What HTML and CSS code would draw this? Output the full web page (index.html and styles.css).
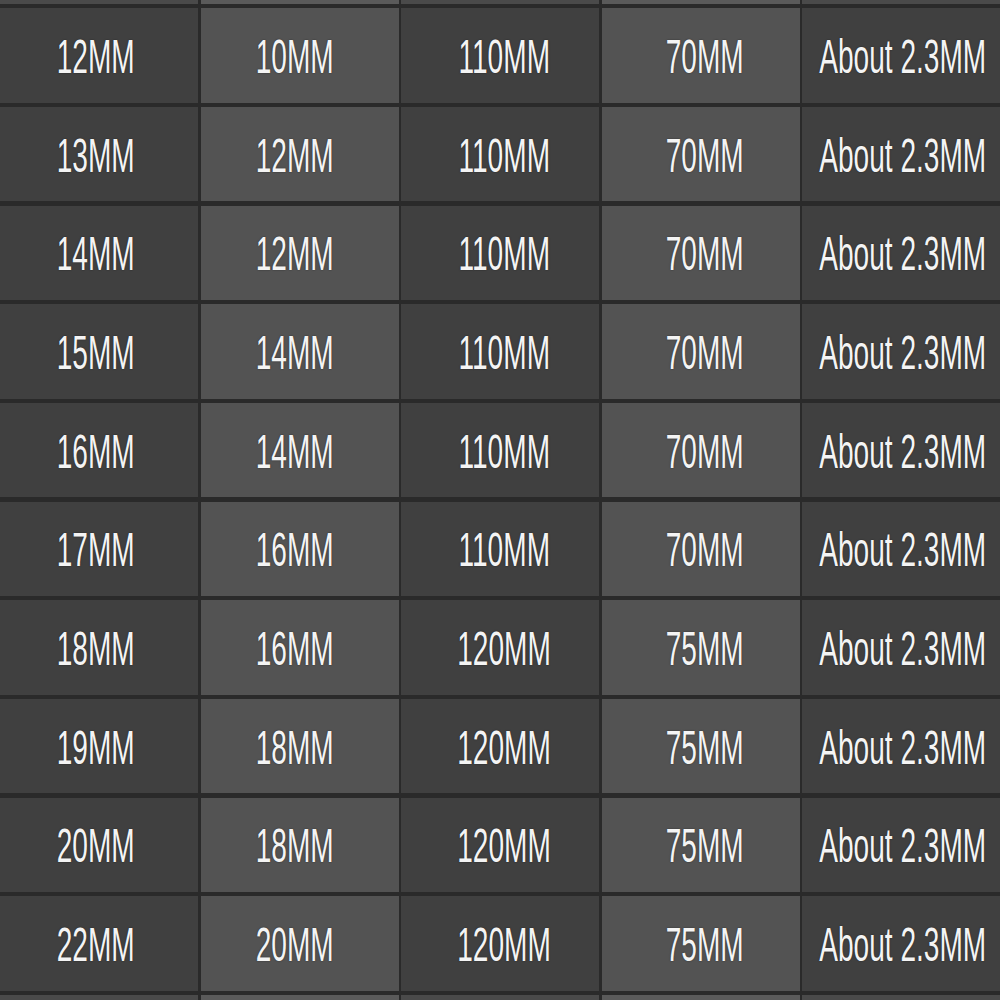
FILE: index.html
```html
<!DOCTYPE html>
<html>
<head>
<meta charset="utf-8">
<link rel="stylesheet" href="styles.css">
</head>
<body>
<div class="table">
  <div class="cell dark edge"></div><div class="cell light edge"></div><div class="cell dark edge"></div><div class="cell light edge"></div><div class="cell dark edge"></div>

  <div class="cell dark"><span>12MM</span></div><div class="cell light"><span>10MM</span></div><div class="cell dark"><span>110MM</span></div><div class="cell light"><span>70MM</span></div><div class="cell dark"><span>About 2.3MM</span></div>
  <div class="cell dark"><span>13MM</span></div><div class="cell light"><span>12MM</span></div><div class="cell dark"><span>110MM</span></div><div class="cell light"><span>70MM</span></div><div class="cell dark"><span>About 2.3MM</span></div>
  <div class="cell dark"><span>14MM</span></div><div class="cell light"><span>12MM</span></div><div class="cell dark"><span>110MM</span></div><div class="cell light"><span>70MM</span></div><div class="cell dark"><span>About 2.3MM</span></div>
  <div class="cell dark"><span>15MM</span></div><div class="cell light"><span>14MM</span></div><div class="cell dark"><span>110MM</span></div><div class="cell light"><span>70MM</span></div><div class="cell dark"><span>About 2.3MM</span></div>
  <div class="cell dark"><span>16MM</span></div><div class="cell light"><span>14MM</span></div><div class="cell dark"><span>110MM</span></div><div class="cell light"><span>70MM</span></div><div class="cell dark"><span>About 2.3MM</span></div>
  <div class="cell dark"><span>17MM</span></div><div class="cell light"><span>16MM</span></div><div class="cell dark"><span>110MM</span></div><div class="cell light"><span>70MM</span></div><div class="cell dark"><span>About 2.3MM</span></div>
  <div class="cell dark"><span>18MM</span></div><div class="cell light"><span>16MM</span></div><div class="cell dark"><span>120MM</span></div><div class="cell light"><span>75MM</span></div><div class="cell dark"><span>About 2.3MM</span></div>
  <div class="cell dark"><span>19MM</span></div><div class="cell light"><span>18MM</span></div><div class="cell dark"><span>120MM</span></div><div class="cell light"><span>75MM</span></div><div class="cell dark"><span>About 2.3MM</span></div>
  <div class="cell dark"><span>20MM</span></div><div class="cell light"><span>18MM</span></div><div class="cell dark"><span>120MM</span></div><div class="cell light"><span>75MM</span></div><div class="cell dark"><span>About 2.3MM</span></div>
  <div class="cell dark"><span>22MM</span></div><div class="cell light"><span>20MM</span></div><div class="cell dark"><span>120MM</span></div><div class="cell light"><span>75MM</span></div><div class="cell dark"><span>About 2.3MM</span></div>

  <div class="cell dark edge"></div><div class="cell light edge"></div><div class="cell dark edge"></div><div class="cell light edge"></div><div class="cell dark edge"></div>
</div>
</body>
</html>
```
FILE: styles.css
```css
html, body {
  margin: 0;
  padding: 0;
  background: #2a2a2a;
}
.table {
  width: 1000px;
  height: 1000px;
  display: grid;
  grid-template-columns: repeat(5, 1fr);
  grid-template-rows: 4px repeat(10, 94.5px) 5px;
  column-gap: 2.5px;
  row-gap: 4.18px;
  font-family: "Liberation Sans", Arial, sans-serif;
}
.cell {
  display: flex;
  align-items: center;
  justify-content: center;
  padding-top: 3px;
  box-sizing: border-box;
  overflow: hidden;
}
.cell:nth-child(5n+1) { padding-right: 6px; }
.cell:nth-child(5n+2) { padding-right: 10px; }
.cell:nth-child(5n+3) { padding-left: 8px; }
.cell:nth-child(5n+4) { padding-left: 8px; }
.cell:nth-child(5n+5) { padding-left: 4px; }
.edge {
  padding: 0;
}
.dark {
  background: #404040;
}
.light {
  background: #535353;
}
.edge.dark {
  background: #4a4a4a;
}
.edge.light {
  background: #5a5a5a;
}
.cell span {
  display: inline-block;
  font-size: 48px;
  line-height: 1;
  color: #f4f4f4;
  white-space: nowrap;
  transform: scaleX(0.585);
  text-shadow: 0 0 2px rgba(0,0,0,0.6);
}
```
